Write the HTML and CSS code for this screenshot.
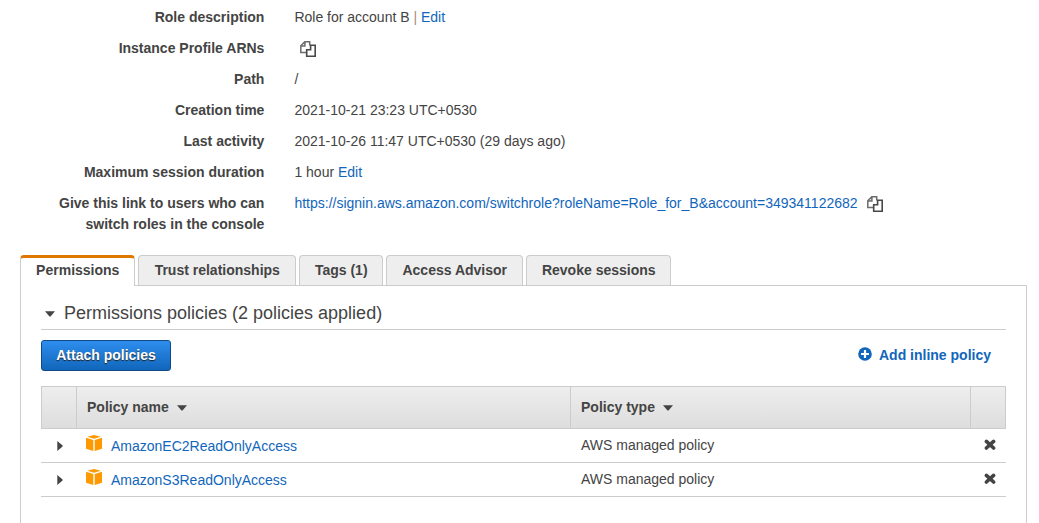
FILE: index.html
```
<!DOCTYPE html>
<html lang="en">
<head>
<meta charset="utf-8">
<title>Role summary</title>
<link rel="stylesheet" href="styles.css">
</head>
<body>
<svg class="defs" width="0" height="0" aria-hidden="true">
  <symbol id="copy" viewBox="0 0 16 16">
    <path d="M6 11.6H.8V4.8L4.8.8H9.7V4.4M.8 4.9H4.9V.8" fill="none" stroke="#6c6c6c" stroke-width="1.5"/>
    <path d="M6.7 8.7H10.6V4.3H15.2V15.2H6.7z" fill="#fff" stroke="#484848" stroke-width="1.6"/>
  </symbol>
  <symbol id="cube" viewBox="0 0 16 16">
    <path d="M8 0 14.8 1.8 8 3.8 1.2 1.8zM0 2.7 7.3 4.9V16L0 13.8zM16 2.7 8.7 4.9V16L16 13.8z" fill="#f90"/>
  </symbol>
  <symbol id="remove" viewBox="0 0 12 12">
    <path d="M2.4 2.4 9.6 9M9.6 2.4 2.4 9" stroke="#444" stroke-width="3.6" stroke-linecap="round"/>
  </symbol>
</svg>
<dl class="details">
  <dt>Role description</dt><dd>Role for account B <span class="separator">|</span> <a>Edit</a></dd>
  <dt>Instance Profile ARNs</dt><dd><svg class="copy copy-lone"><use href="#copy"/></svg></dd>
  <dt>Path</dt><dd>/</dd>
  <dt>Creation time</dt><dd>2021-10-21 23:23 UTC+0530</dd>
  <dt>Last activity</dt><dd>2021-10-26 11:47 UTC+0530 (29 days ago)</dd>
  <dt>Maximum session duration</dt><dd>1 hour <a>Edit</a></dd>
  <dt>Give this link to users who can<br>switch roles in the console</dt>
  <dd class="link-row"><a>https://signin.aws.amazon.com/switchrole?roleName=Role_for_B&amp;account=349341122682</a><svg class="copy"><use href="#copy"/></svg></dd>
</dl>
<nav class="tabs">
  <div class="tab tab-permissions active">Permissions</div>
  <div class="tab tab-trust">Trust relationships</div>
  <div class="tab tab-tags">Tags (1)</div>
  <div class="tab tab-advisor">Access Advisor</div>
  <div class="tab tab-revoke">Revoke sessions</div>
</nav>
<main class="panel">
  <h2 class="heading"><svg class="caret" viewBox="0 0 10 6"><path d="M0 .3H10L5.5 5.5H4.5z"/></svg><span>Permissions policies (2 policies applied)</span></h2>
  <div class="actions">
    <button class="attach">Attach policies</button>
    <a class="add"><svg class="plus" viewBox="0 0 14 14"><circle cx="7" cy="7" r="6.8" fill="#1166bb"/><path d="M7 3V11M3 7H11" stroke="#fff" stroke-width="2.2"/></svg>Add inline policy</a>
  </div>
  <div class="row header">
    <div></div>
    <div class="cell">Policy name<svg class="caret" viewBox="0 0 10 6"><path d="M0 .3H10L5.5 5.5H4.5z"/></svg></div>
    <div class="cell">Policy type<svg class="caret" viewBox="0 0 10 6"><path d="M0 .3H10L5.5 5.5H4.5z"/></svg></div>
    <div></div>
  </div>
  <div class="row">
    <div class="expand"><svg viewBox="0 0 6 10"><path d="M.3 0V10L5.6 5.5V4.5z"/></svg></div>
    <div class="cell name"><svg class="cube"><use href="#cube"/></svg><a>AmazonEC2ReadOnlyAccess</a></div>
    <div class="cell type">AWS managed policy</div>
    <div class="delete"><svg><use href="#remove"/></svg></div>
  </div>
  <div class="row">
    <div class="expand"><svg viewBox="0 0 6 10"><path d="M.3 0V10L5.6 5.5V4.5z"/></svg></div>
    <div class="cell name"><svg class="cube"><use href="#cube"/></svg><a>AmazonS3ReadOnlyAccess</a></div>
    <div class="cell type">AWS managed policy</div>
    <div class="delete"><svg><use href="#remove"/></svg></div>
  </div>
</main>
</body>
</html>
```
FILE: styles.css
```
* { box-sizing: border-box; }
html, body { height: 100%; }
body {
  margin: 0;
  padding-top: 7px;
  display: flex;
  flex-direction: column;
  overflow: hidden;
  background: #fff;
  color: #444;
  font: 14px/21px "Liberation Sans", Arial, sans-serif;
}
svg { display: block; flex: none; fill: #444; }
.defs { display: none; }
a { color: #1166bb; }
.separator { color: #a58a7a; }
.details {
  margin: 0;
  display: grid;
  grid-template-columns: 264.4px 1fr;
  gap: 10px 30px;
}
.details dt { font-weight: bold; text-align: right; }
.details dd { margin: 0; white-space: nowrap; height: 21px; }
.copy { width: 16px; height: 16px; }
.copy-lone { margin: 3px 0 0 5.6px; }
.link-row { display: flex; gap: 9.5px; }
.link-row .copy { margin-top: 3px; }

.tabs { display: flex; gap: 3px; margin: 20px 0 0 20px; flex: none; position: relative; }
.tab {
  height: 30px;
  padding-left: .5px;
  border: 1px solid #ccc;
  border-bottom: 0;
  border-radius: 4px 4px 0 0;
  background: #eee;
  font-weight: bold;
  line-height: 29px;
  text-align: center;
  white-space: nowrap;
}
.tab.active {
  height: 31px;
  margin-bottom: -1px;
  border-top: 3px solid #e07700;
  background: #fff;
  line-height: 25px;
}
.tab-permissions { width: 115px; }
.tab-trust { width: 158px; }
.tab-tags { width: 84px; }
.tab-advisor { width: 137px; }
.tab-revoke { width: 145px; }

.panel {
  flex: 1;
  margin: 0 12px 0 20px;
  padding: 12px 20px 0;
  border: 1px solid #ccc;
  border-bottom: 0;
}
.caret { width: 10px; height: 6px; }
.heading {
  margin: 0;
  height: 32px;
  padding-left: 4px;
  display: flex;
  gap: 9px;
  border-bottom: 1px solid #ccc;
  font-size: 18px;
  font-weight: normal;
  line-height: 30px;
}
.heading .caret { margin-top: 13px; }
.actions { display: flex; justify-content: space-between; padding: 10px 15px 15px 0; }
.attach {
  width: 130px;
  height: 31px;
  padding: 0 0 1px;
  border: 1px solid #0f4a86;
  border-radius: 3px;
  background: linear-gradient(#2e8ded, #1166bb);
  color: #fff;
  font: bold 14px/28px "Liberation Sans", Arial, sans-serif;
  text-shadow: 0 1px 1px #222;
}
.add { display: flex; gap: 7px; font-weight: bold; line-height: 30px; }
.plus { width: 14px; height: 14px; margin-top: 7px; }

.row {
  display: grid;
  grid-template-columns: 35px 494px 400px 1fr;
  height: 34px;
  border-bottom: 1px solid #ccc;
}
.header {
  height: 43px;
  border: 1px solid #ccc;
  background: linear-gradient(#eee, #ddd);
  font-weight: bold;
  grid-template-columns: 34px 494px 400px 1fr;
}
.header > div + div { border-left: 1px solid #ccc; }
.cell { display: flex; padding-left: 11px; }
.header .cell { padding-left: 10px; line-height: 41px; gap: 8px; }
.header .caret { margin-top: 18px; }
.row .name { padding-left: 10px; gap: 9px; line-height: 35px; }
.type { line-height: 33px; }
.cube { width: 16px; height: 16px; margin-top: 6px; }
.expand { padding: 12px 0 0 16px; }
.expand svg { width: 6px; height: 10px; }
.delete { padding: 10px 0 0 14px; }
.delete svg { width: 12px; height: 12px; }
```
